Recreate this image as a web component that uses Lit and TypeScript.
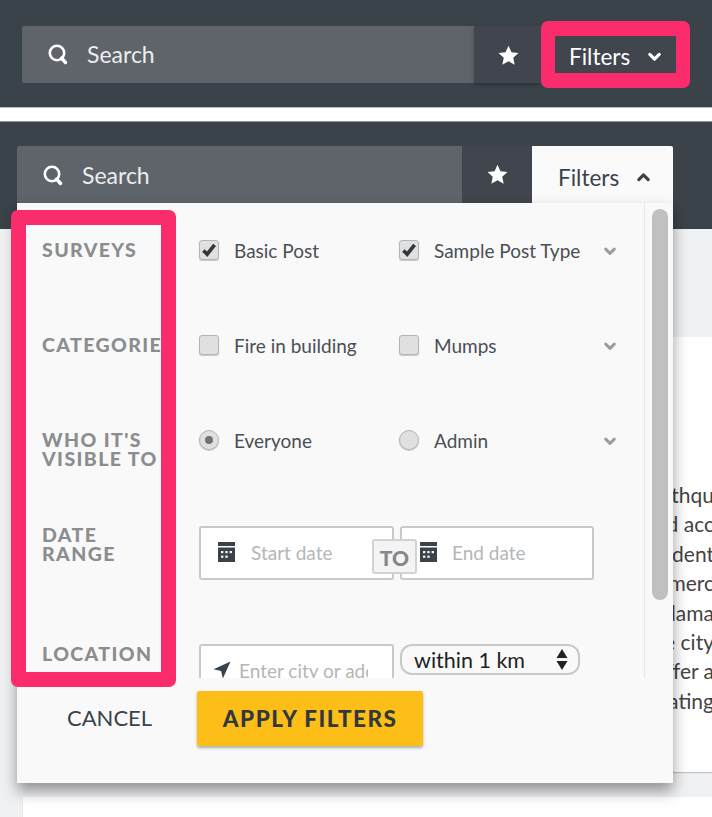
import {html, css, LitElement} from 'lit';
import {customElement} from 'lit/decorators.js';

const searchIcon = html`<svg class="ic-search" viewBox="0 0 22 22"><circle cx="10" cy="10" r="7.2" fill="none" stroke="#fff" stroke-width="2.6"/><path d="M14.5 15l4 4.5" stroke="#fff" stroke-width="3.4" stroke-linecap="round"/></svg>`;
const starIcon = html`<svg class="ic-star" viewBox="0 0 20 20"><path d="M10 .8l2.8 6.2 6.7.7-5 4.5 1.4 6.6L10 15.4l-5.9 3.4 1.4-6.6-5-4.5 6.7-.7z" fill="#fff"/></svg>`;
const chevDown = html`<svg class="chev" viewBox="0 0 14 10"><path d="M2 2.2l5 5 5-5" fill="none" stroke="currentColor" stroke-width="3.4" stroke-linecap="round" stroke-linejoin="round"/></svg>`;
const chevUp = html`<svg class="chev" viewBox="0 0 14 10"><path d="M2 7.8l5-5 5 5" fill="none" stroke="currentColor" stroke-width="3.4" stroke-linecap="round" stroke-linejoin="round"/></svg>`;
const checkIcon = html`<svg viewBox="0 0 16 16"><path d="M2.4 8.4l3.8 3.8 7.4-9.4" fill="none" stroke="#33383e" stroke-width="3.6"/></svg>`;
const calendarIcon = html`<svg class="ic-cal" viewBox="0 0 17 20"><path d="M0 0h17v4H0z" fill="#3a424a"/><path d="M0 5.5h17V20H0z" fill="#3a424a"/><g fill="#f4f4f4"><rect x="3" y="9" width="2.4" height="2.2"/><rect x="7.3" y="9" width="2.4" height="2.2"/><rect x="11.6" y="9" width="2.4" height="2.2"/><rect x="3" y="13.6" width="2.4" height="2.2"/><rect x="7.3" y="13.6" width="2.4" height="2.2"/></g></svg>`;
const arrowIcon = html`<svg class="ic-arrow" viewBox="0 0 18 18"><path d="M17.5.5L.5 8.2l7.6 1.7 1.8 7.6z" fill="#3a424a"/></svg>`;

const cardLines = ['earthqu', 'and acc', 'student', 'commerc', 'dama', 'the city', 'suffer a', 'creating'];

@customElement('app-root')
export class AppRoot extends LitElement {
  static styles = css`
    :host {
      display: block;
      position: relative;
      width: 712px;
      height: 817px;
      overflow: hidden;
      background: #f0f1f3;
      font-family: Lato, sans-serif;
      color: #4a4f55;
    }
    .ic-search {
      width: 22px;
      height: 22px;
      flex: none;
    }
    .ic-star {
      width: 21px;
      height: 21px;
    }
    .chev {
      width: 13px;
      height: 10px;
      flex: none;
    }
    .top {
      border-bottom: 1px solid #b9bcbf;
      background: #3a424a;
      padding: 26px 22px 0;
      height: 81px;
      width: 668px;
    }
    .gap {
      height: 13px;
      background: #fff;
    }
    .bar {
      display: flex;
      height: 57px;
    }
    .search {
      display: flex;
      align-items: center;
      background: #5f646b;
      color: #eceded;
      font-size: 23px;
      border-radius: 2px 0 0 2px;
      width: 452px;
      padding: 0 0 2px 25px;
      box-sizing: border-box;
      gap: 18px;
    }
    .star {
      display: flex;
      align-items: center;
      justify-content: center;
      background: #41454d;
      width: 67px;
    }
    .top .star {
      box-shadow: 0 2px 4px rgba(0, 0, 0, 0.25);
      padding: 2px 0 0 2px;
      box-sizing: border-box;
    }
    .filters {
      display: flex;
      align-items: center;
      box-sizing: border-box;
      font-size: 22.5px;
      gap: 18px;
    }
    .top .filters {
      background: #41454d;
      color: #fff;
      margin: 10px 0 0 14px;
      width: 121px;
      height: 37px;
      padding: 4px 0 0 14px;
    }
    .second {
      position: relative;
      background: #3a424a;
      padding: 24px 0 0 17px;
      border-top: 1px solid #8d9195;
      height: 83px;
    }
    .second .search {
      width: 445px;
      padding-bottom: 0;
    }
    .second .star {
      width: 70px;
    }
    .second .filters {
      width: 141px;
      padding: 5px 0 0 26px;
      background: #fafafa;
      color: #3a424a;
      border-radius: 0 2px 0 0;
    }
    main {
      display: flex;
      flex-direction: column;
      gap: 25px;
      padding: 108px 0 0 23px;
    }
    .card {
      background: #fff;
      height: 435px;
      padding-top: 143px;
      box-sizing: border-box;
      box-shadow: 0 1px 1px rgba(0, 0, 0, 0.2);
    }
    .card div {
      font-size: 21px;
      line-height: 29.4px;
      height: 29.4px;
      margin-right: -2px;
      text-align: right;
      white-space: nowrap;
      color: #444;
    }
    .card.next {
      height: 40px;
      padding: 0;
    }
    .panel {
      position: absolute;
      left: 17px;
      top: 203px;
      width: 656px;
      height: 580px;
      background: #f9f9f9;
      box-shadow: 0 8px 14px rgba(0, 0, 0, 0.4);
    }
    .upper {
      display: flex;
      height: 475px;
      overflow: hidden;
    }
    .form {
      flex: 1;
      padding: 32px 0 0 25px;
    }
    .row {
      display: flex;
      height: 95px;
    }
    .row.date {
      height: 119px;
    }
    .label {
      width: 157px;
      flex: none;
      padding-top: 5px;
      font-size: 19.5px;
      line-height: 19px;
      font-weight: 900;
      letter-spacing: 1.4px;
      color: #8b8d8f;
      white-space: nowrap;
    }
    .opts {
      display: flex;
      align-items: flex-start;
      flex: 1;
    }
    .opt {
      display: flex;
      align-items: center;
      gap: 15px;
      width: 200px;
      height: 30px;
      font-size: 19px;
    }
    .box {
      width: 18px;
      height: 18px;
      flex: none;
      border: 1px solid #b5b5b5;
      border-radius: 3px;
      background: #e0e0e0;
      box-shadow: 0 1px 1px rgba(0, 0, 0, 0.2);
      display: flex;
      align-items: center;
      justify-content: center;
    }
    .box svg {
      width: 16px;
      height: 16px;
    }
    .box.radio {
      border-radius: 50%;
    }
    .box.radio i {
      width: 8px;
      height: 8px;
      border-radius: 50%;
      background: #6f7276;
    }
    .more {
      color: #9a9c9e;
      margin: 5px 0 0 5px;
    }
    .more .chev {
      width: 12px;
      height: 9px;
    }
    .fields {
      position: relative;
      display: flex;
      gap: 6px;
      align-items: flex-start;
      margin-top: 6px;
    }
    .fields.place {
      margin-top: 5px;
    }
    .input {
      width: 195px;
      height: 54px;
      box-sizing: border-box;
      border: 2px solid #c9c9c9;
      border-radius: 3px;
      background: #fff;
      display: flex;
      align-items: center;
      font-size: 19px;
      color: #b4b6b8;
      padding: 0 0 2px 17px;
      gap: 16px;
      white-space: nowrap;
    }
    .ic-cal {
      width: 17px;
      height: 20px;
      flex: none;
    }
    .ic-arrow {
      width: 18px;
      height: 18px;
      flex: none;
    }
    .input.loc {
      padding-left: 12px;
      gap: 8px;
    }
    .placeholder {
      width: 129px;
      overflow: hidden;
    }
    .input.end {
      width: 194px;
      padding-left: 18px;
      gap: 15px;
    }
    .to {
      position: absolute;
      left: 173px;
      top: 13px;
      width: 45px;
      height: 35px;
      box-sizing: border-box;
      border: 2px solid #d2d2d2;
      border-radius: 3px;
      background: #f4f4f4;
      font-size: 21px;
      font-weight: 900;
      color: #85888b;
      text-align: center;
      line-height: 33px;
    }
    .select {
      width: 180px;
      height: 31px;
      box-sizing: border-box;
      border: 2px solid #c9c9c9;
      border-radius: 12px;
      background: #f9f9f9;
      display: flex;
      align-items: center;
      justify-content: space-between;
      padding: 0 10px 0 12px;
      font-size: 21.5px;
      color: #222;
    }
    .select svg {
      width: 12px;
      height: 21px;
    }
    .track {
      width: 29px;
      border-left: 1px solid #e6e6e6;
      padding: 6px 0 0 7px;
      box-sizing: border-box;
    }
    .thumb {
      width: 16px;
      height: 391px;
      background: #c0c0c0;
      border-radius: 8px;
    }
    .foot {
      display: flex;
      align-items: flex-start;
      padding: 13px 0 0 50px;
      gap: 45px;
    }
    .cancel {
      font-size: 22px;
      line-height: 54px;
      color: #3a424a;
    }
    .apply {
      width: 226px;
      height: 55px;
      display: flex;
      align-items: center;
      justify-content: center;
      background: #fdbf17;
      border-radius: 2px;
      box-shadow: 0 2px 3px rgba(0, 0, 0, 0.3);
      font-size: 22.5px;
      font-weight: 900;
      letter-spacing: 1.45px;
      color: #33383e;
    }
    .mark {
      position: absolute;
      box-sizing: border-box;
      border: 15px solid #fb2c6c;
      border-radius: 7px;
    }
    .mark.filters-mark {
      left: 541px;
      top: 21px;
      width: 149px;
      height: 67px;
      border-width: 15px 14px;
    }
    .mark.labels-mark {
      left: 11px;
      top: 210px;
      width: 165px;
      height: 477px;
    }
  `;

  render() {
    return html`
      <div class="top">
        <div class="bar">
          <div class="search">${searchIcon}Search</div>
          <div class="star">${starIcon}</div>
          <div class="filters">Filters ${chevDown}</div>
        </div>
      </div>
      <div class="gap"></div>
      <div class="second">
        <div class="bar">
          <div class="search">${searchIcon}Search</div>
          <div class="star">${starIcon}</div>
          <div class="filters">Filters ${chevUp}</div>
        </div>
      </div>
      <main>
        <div class="card">${cardLines.map(line => html`<div>${line}</div>`)}</div>
        <div class="card next"></div>
      </main>
      ${this.renderPanel()}
      <div class="mark filters-mark"></div>
      <div class="mark labels-mark"></div>
    `;
  }

  renderPanel() {
    return html`
      <div class="panel">
        <div class="upper">
          <div class="form">
            <div class="row">
              <div class="label">SURVEYS</div>
              <div class="opts">
                <div class="opt"><span class="box">${checkIcon}</span>Basic Post</div>
                <div class="opt"><span class="box">${checkIcon}</span>Sample Post Type</div>
                <span class="more">${chevDown}</span>
              </div>
            </div>
            <div class="row">
              <div class="label">CATEGORIES</div>
              <div class="opts">
                <div class="opt"><span class="box"></span>Fire in building</div>
                <div class="opt"><span class="box"></span>Mumps</div>
                <span class="more">${chevDown}</span>
              </div>
            </div>
            <div class="row">
              <div class="label">WHO IT'S<br />VISIBLE TO</div>
              <div class="opts">
                <div class="opt"><span class="box radio"><i></i></span>Everyone</div>
                <div class="opt"><span class="box radio"></span>Admin</div>
                <span class="more">${chevDown}</span>
              </div>
            </div>
            <div class="row date">
              <div class="label">DATE<br />RANGE</div>
              <div class="fields">
                <div class="input">${calendarIcon}Start date</div>
                <div class="input end">${calendarIcon}End date</div>
                <div class="to">TO</div>
              </div>
            </div>
            <div class="row">
              <div class="label">LOCATION</div>
              <div class="fields place">
                <div class="input loc">${arrowIcon}<span class="placeholder">Enter city or address</span></div>
                <div class="select">
                  within 1 km
                  <svg viewBox="0 0 12 21"><path d="M6 0l5.5 9H.5zM6 21L.5 12h11z" fill="#222"/></svg>
                </div>
              </div>
            </div>
          </div>
          <div class="track"><div class="thumb"></div></div>
        </div>
        <div class="foot">
          <span class="cancel">CANCEL</span>
          <span class="apply">APPLY FILTERS</span>
        </div>
      </div>
    `;
  }
}
